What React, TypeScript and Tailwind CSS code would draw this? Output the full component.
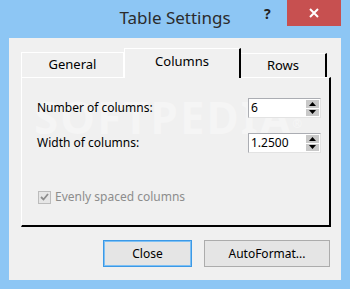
import React from 'react';

const font = "font-['Noto_Sans','DejaVu_Sans',sans-serif]";

const Spin: React.FC<{ value: string }> = ({ value }) => (
  <div className="flex h-[20px] w-[73px] border border-[#abadb3] border-r-[#e3e3e3] border-b-[#e3e3e3] bg-white">
    <div className="flex flex-1 items-center pl-[2px] text-[12px] leading-none text-black">{value}</div>
    <div className="flex w-[15px] flex-col gap-px bg-white p-px">
      <div className="flex flex-1 items-center justify-center bg-[#c9c9c9]">
        <svg width="7" height="4" viewBox="0 0 7 4">
          <path d="M0 4 L3.5 0 L7 4 Z" fill="#000" />
        </svg>
      </div>
      <div className="flex flex-1 items-center justify-center bg-[#c9c9c9]">
        <svg width="7" height="4" viewBox="0 0 7 4">
          <path d="M0 0 L7 0 L3.5 4 Z" fill="#000" />
        </svg>
      </div>
    </div>
  </div>
);

export default function App() {
  return (
    <div className={`flex h-[289px] w-[350px] flex-col bg-[#8dc6f4] ${font}`}>
      {/* title bar */}
      <div className="relative h-[38px] shrink-0">
        <div className="pt-[7px] text-center text-[17px] leading-[22px] text-[#2b2b2b]">
          Table Settings
        </div>
        <div className="absolute left-[264px] top-[3px] text-[14px] font-bold text-[#222]">?</div>
        <div className="absolute right-[9px] top-0 flex h-[26px] w-[54px] items-center justify-center bg-[#c75050]">
          <svg width="10" height="10" viewBox="0 0 10 10">
            <path d="M1 1 L9 9 M9 1 L1 9" stroke="#fff" strokeWidth="2" />
          </svg>
        </div>
      </div>

      {/* client area */}
      <div className="mx-[9px] mb-[9px] flex flex-1 flex-col bg-[#f0f0f0] px-[12px] pt-[10px] text-[12px] text-black">
        {/* tabs */}
        <div className="relative z-10 flex h-[29px] items-end">
          <div className="flex h-[25px] w-[103px] items-center justify-center border-l border-t border-r border-white text-[13px]">
            General
          </div>
          <div className="-mb-px flex h-[30px] w-[117px] items-center justify-center border-l border-t border-white border-r-2 border-r-black bg-[#f0f0f0] pb-[4px] text-[13px]">
            Columns
          </div>
          <div className="flex h-[24px] w-[86px] items-center justify-center border-t border-white border-r-2 border-r-black text-[13px]">
            Rows
          </div>
        </div>

        {/* panel */}
        <div className="relative h-[150px] w-[310px] border-l border-t border-white border-r-2 border-b-2 border-r-black border-b-black">
          <div className="pointer-events-none absolute left-[12px] top-[6px] select-none text-[44px] font-bold tracking-[2px] text-[#f5f5f5]">
            SOFTPEDIA<sup className="text-[12px]">®</sup>
          </div>
          <div className="relative flex flex-col pl-[15px] pr-[8px] pt-[20px]">
            <div className="flex items-center justify-between">
              <span>Number of columns:</span>
              <Spin value="6" />
            </div>
            <div className="mt-[15px] flex items-center justify-between">
              <span>Width of columns:</span>
              <Spin value="1.2500" />
            </div>
            <div className="mt-[35px] flex items-center gap-[4px] pl-px text-[#8d8d8d]">
              <div className="flex h-[13px] w-[13px] items-center justify-center border border-[#bcbcbc] bg-[#e6e6e6]">
                <svg width="9" height="8" viewBox="0 0 9 8">
                  <path d="M1 4 L3.5 6.5 L8 1" stroke="#8d8d8d" strokeWidth="1.8" fill="none" />
                </svg>
              </div>
              <span>Evenly spaced columns</span>
            </div>
          </div>
        </div>

        {/* buttons */}
        <div className="mt-[13px] flex justify-end gap-[12px]">
          <button className="h-[27px] w-[89px] border border-[#3c99e6] bg-[#e5e5e5] text-[12px] text-black shadow-[inset_0_0_0_1px_#7ec0f4]">
            Close
          </button>
          <button className="mr-[-1px] h-[27px] w-[126px] border border-[#acacac] bg-[#e5e5e5] text-[12px] text-black">
            AutoFormat...
          </button>
        </div>
      </div>
    </div>
  );
}
